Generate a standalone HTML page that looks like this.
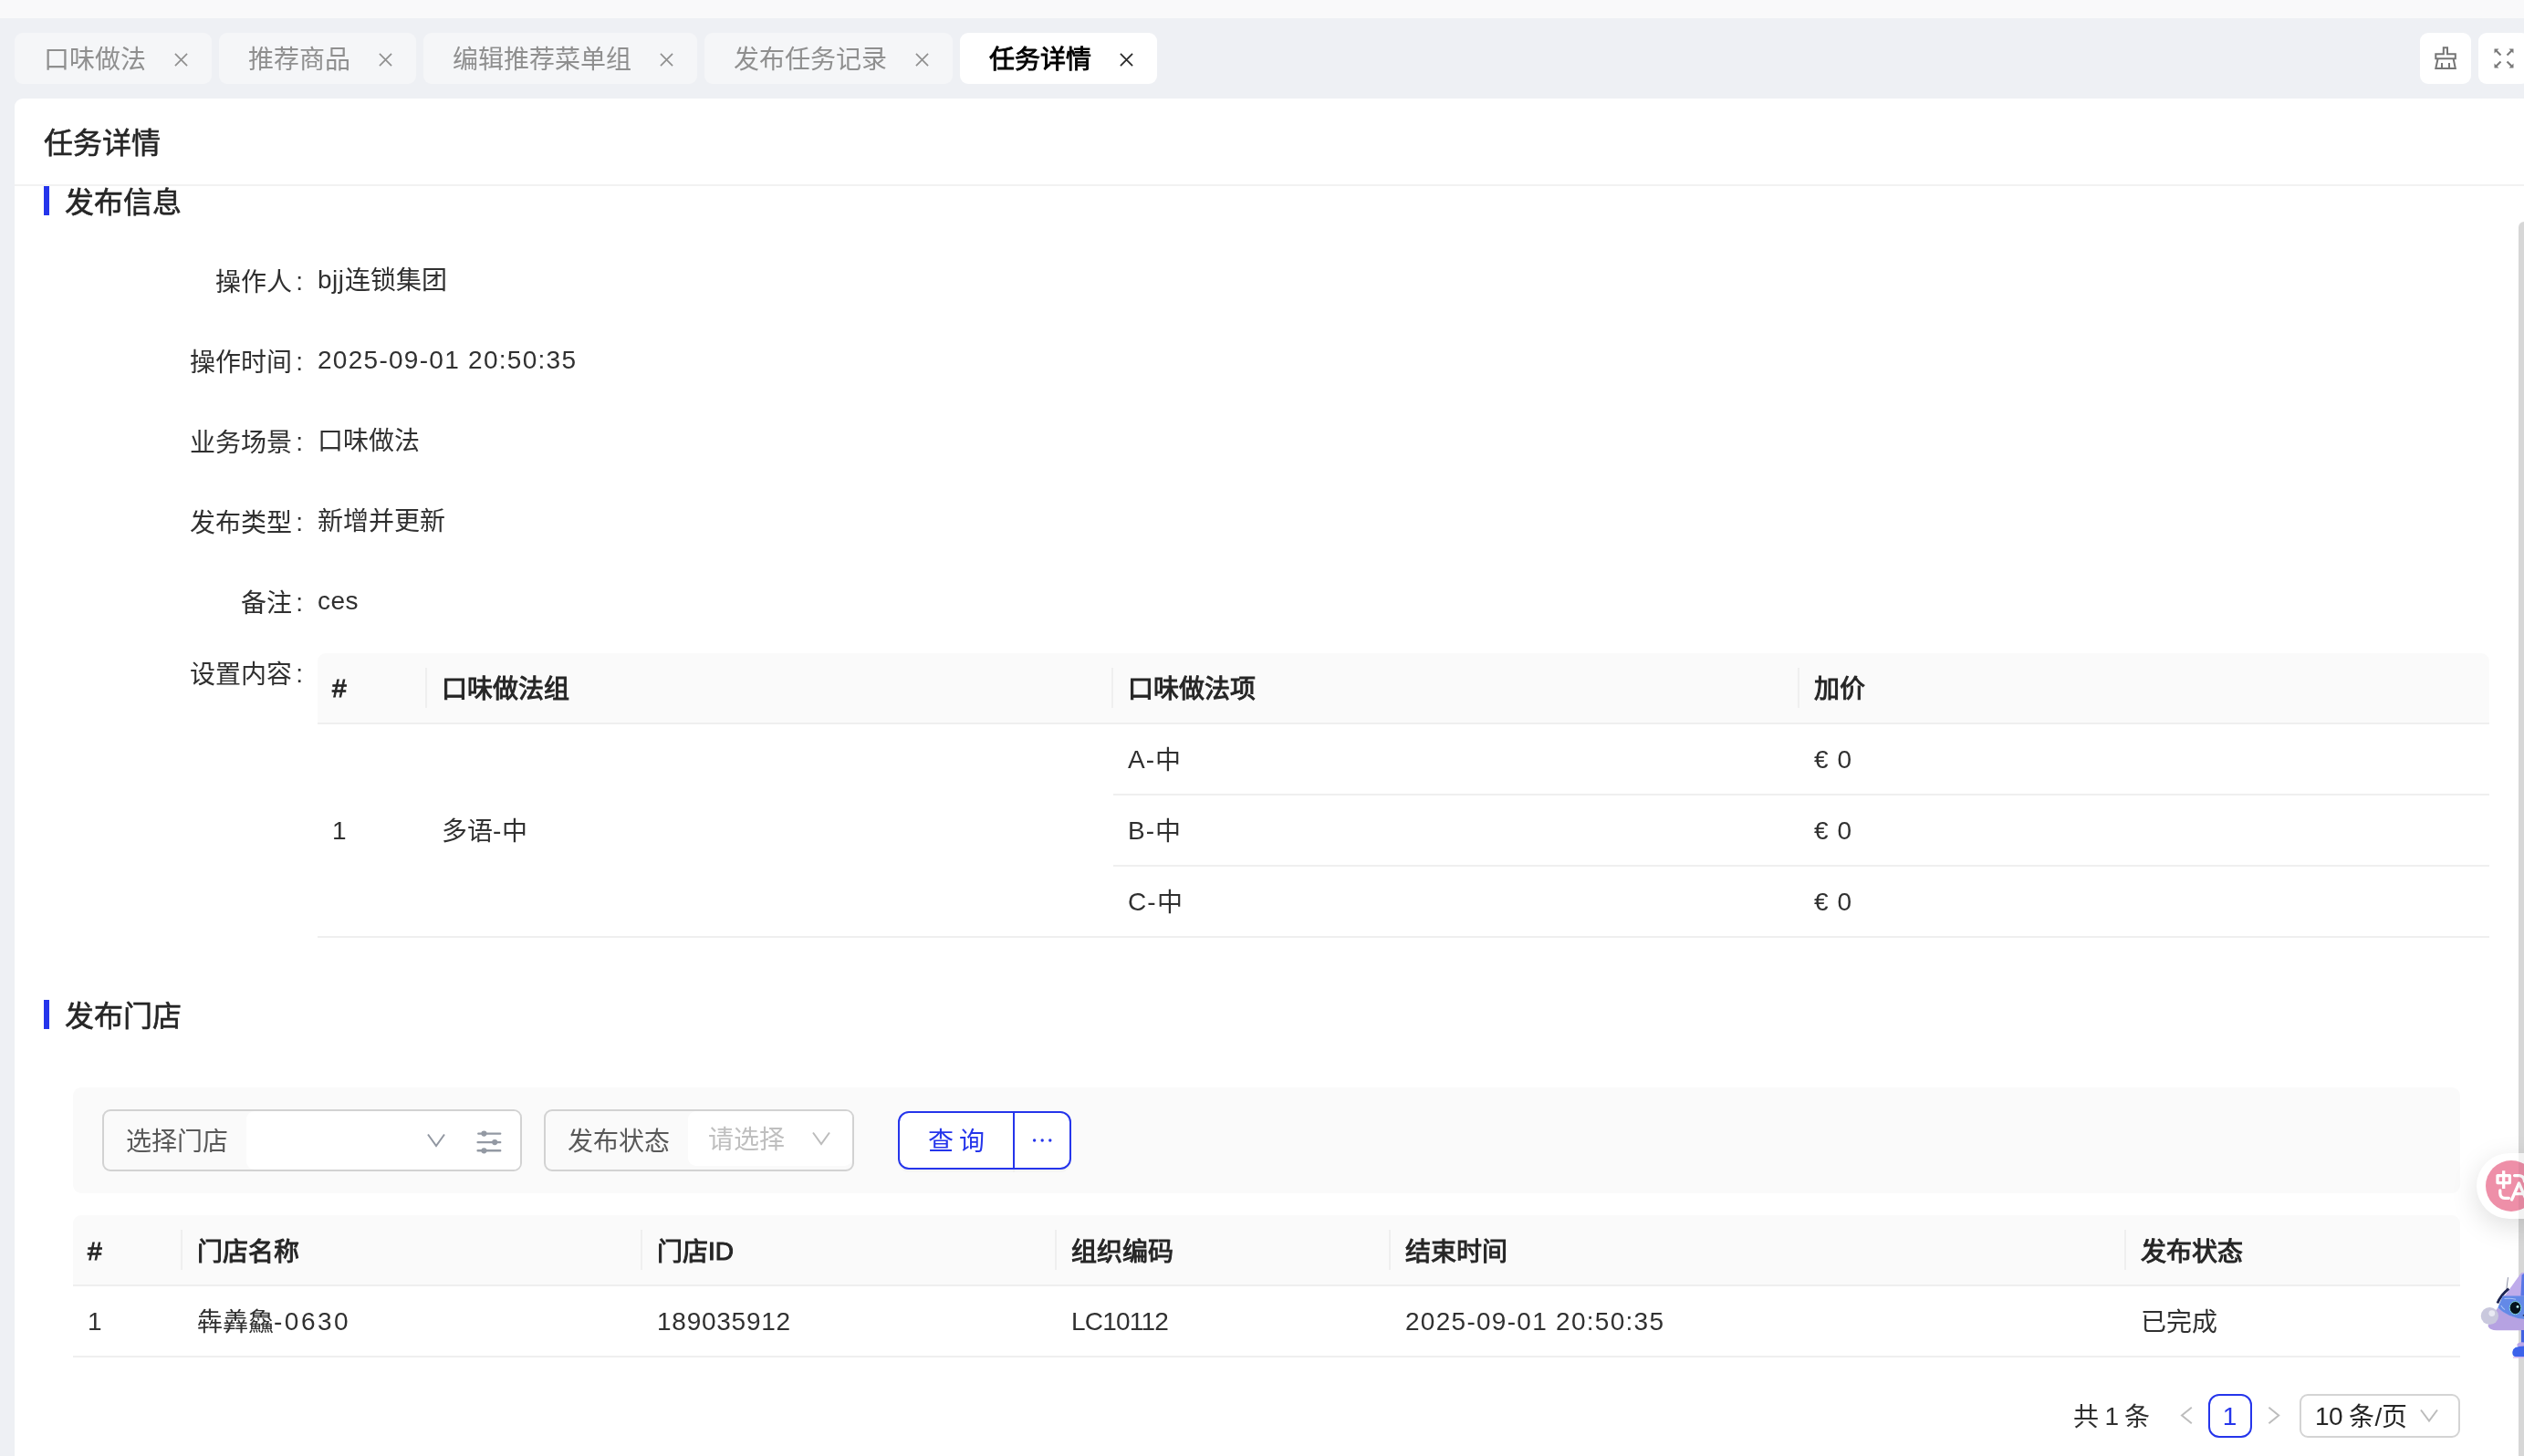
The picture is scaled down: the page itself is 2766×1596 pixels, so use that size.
<!DOCTYPE html>
<html lang="zh-CN">
<head>
<meta charset="utf-8">
<title>任务详情</title>
<style>
*{box-sizing:border-box}
html,body{margin:0;padding:0}
body{width:2766px;height:1596px;overflow:hidden;position:relative;background:#eef0f4;font-family:"Liberation Sans",sans-serif;color:#262626;font-size:28px;line-height:44px}
#root{position:absolute;left:0;top:0;width:2766px;height:1596px;overflow:hidden;will-change:transform}
.a{position:absolute}
.l{position:relative;top:-1px}
.d1{margin-top:1px}.d2{margin-top:2px}.d3{margin-top:3px}
.topstrip{left:0;top:0;width:2766px;height:20px;background:#f9f9fa}
/* tabs */
.tab{position:absolute;top:36px;height:56px;border-radius:9px;background:#f5f6f8;color:#8f8f8f;font-size:28px;line-height:60px;padding-left:32px;white-space:nowrap}
.tab.on{background:#fff;color:#000;-webkit-text-stroke:.9px #000}
.tab svg{position:absolute;right:26px;top:22px;width:15px;height:15px}
.ibtn{position:absolute;top:36px;width:56px;height:56px;border-radius:9px;background:#fff}
/* card */
.card{left:16px;top:108px;width:2760px;height:1500px;background:#fff;border-radius:9px 0 0 0}
.ptitle{left:48px;top:135px;font-size:32px;line-height:44px;color:#262626;-webkit-text-stroke:.6px #262626;white-space:nowrap}
.hr{left:16px;top:202px;width:2750px;height:2px;background:#f2f2f2}
.bar{left:48px;width:6px;height:32px;background:#2535eb}
.stitle{left:71px;font-size:32px;line-height:44px;color:#262626;-webkit-text-stroke:.6px #262626;white-space:nowrap}
/* form */
.lab{position:absolute;margin-top:3px;left:100px;width:248px;text-align:right;height:64px;line-height:64px;color:#303030;white-space:nowrap}
.lab i{font-style:normal;margin:0 16px 0 4px;position:relative;top:-1px}
.val{position:absolute;left:348px;height:64px;line-height:64px;color:#303030;white-space:nowrap}

/* tables */
.th{position:absolute;height:76px;line-height:76px;-webkit-text-stroke:1px #262626;color:#262626;padding-left:16px;white-space:nowrap}
.th.sep:before{content:"";position:absolute;left:-2px;top:16px;width:2px;height:44px;background:#efefef}
.ib{display:inline-block;position:relative}
.th .d2{margin:0;top:2px}.th .d3{margin:0;top:3px}
.td{position:absolute;height:76px;line-height:76px;color:#303030;padding-left:16px;white-space:nowrap}
.thead{position:absolute;height:76px;background:#fafafa;border-radius:9px 9px 0 0}
.ln{position:absolute;height:2px;background:#efefef}

/* filter */
.fpanel{left:80px;top:1192px;width:2616px;height:116px;background:#fafafa;border-radius:9px}
.sel{position:absolute;top:1216px;height:68px;border:2px solid #d2d2d2;border-radius:9px;background:#fafafa}
.sel .lb{position:absolute;left:24px;top:0;height:64px;line-height:68px;color:#595959;white-space:nowrap}
.sel .wh{position:absolute;top:0;bottom:0;right:0;background:#fff;border-radius:9px 7px 7px 9px}
.sel .ph{position:absolute;left:22px;top:0;height:64px;line-height:64px;color:#bfbfbf;white-space:nowrap}
.btn{position:absolute;top:1218px;height:64px;border:2px solid #2535eb;background:#fff;color:#2535eb;line-height:64px;text-align:center;white-space:nowrap;box-shadow:0 3px 0 rgba(0,0,0,0.025)}

/* pager */
.pg{position:absolute;top:1528px;height:48px;line-height:48px;white-space:nowrap;color:#303030}
.pgbox{position:absolute;top:1528px;height:48px;border:2px solid #d4d4d4;border-radius:10px;background:#fff;line-height:44px;white-space:nowrap;color:#262626}
/* float */
.scroll{left:2760px;top:243px;width:12px;height:1400px;border-radius:6px;background:rgba(0,0,0,0.155)}
</style>
</head>
<body>
<div id="root">
<div class="a topstrip"></div>

<!-- tabs -->
<div class="tab" style="left:16px;width:216px">口味做法<svg viewBox="0 0 16 16"><path d="M1 1L15 15M15 1L1 15" stroke="#909090" stroke-width="1.8" fill="none"/></svg></div>
<div class="tab" style="left:240px;width:216px">推荐商品<svg viewBox="0 0 16 16"><path d="M1 1L15 15M15 1L1 15" stroke="#909090" stroke-width="1.8" fill="none"/></svg></div>
<div class="tab" style="left:464px;width:300px">编辑推荐菜单组<svg viewBox="0 0 16 16"><path d="M1 1L15 15M15 1L1 15" stroke="#909090" stroke-width="1.8" fill="none"/></svg></div>
<div class="tab" style="left:772px;width:272px">发布任务记录<svg viewBox="0 0 16 16"><path d="M1 1L15 15M15 1L1 15" stroke="#909090" stroke-width="1.8" fill="none"/></svg></div>
<div class="tab on" style="left:1052px;width:216px">任务详情<svg viewBox="0 0 16 16"><path d="M1 1L15 15M15 1L1 15" stroke="#2a2a2a" stroke-width="1.9" fill="none"/></svg></div>

<!-- right icon buttons -->
<div class="ibtn" style="left:2652px">
<svg class="a" style="left:14px;top:14px" width="28" height="28" viewBox="0 0 28 28" fill="none" stroke="#757575" stroke-width="2">
<path d="M11.8 9.2V2.2H16V9.2H24.8V14.2H3.3V9.2Z"/>
<path d="M5.6 14.2L3.3 25H24.8L22.6 14.2"/>
<path d="M10 19V25M18 19V25"/>
</svg>
</div>
<div class="ibtn" style="left:2716px">
<svg class="a" style="left:16px;top:16px" width="24" height="24" viewBox="0 0 24 24" fill="#7a7a7a" stroke="#7a7a7a" stroke-width="2.2">
<path d="M3 3L8.5 8.5M21 3L15.5 8.5M3 21L8.5 15.5M21 21L15.5 15.5" fill="none"/>
<path d="M1.5 1.5H6.5L1.5 6.5Z M22.5 1.5H17.5L22.5 6.5Z M1.5 22.5H6.5L1.5 17.5Z M22.5 22.5H17.5L22.5 17.5Z" stroke="none"/>
</svg>
</div>

<!-- card -->
<div class="a card"></div>
<div class="a ptitle">任务详情</div>
<div class="a hr"></div>

<div class="a bar" style="top:204px"></div>
<div class="a stitle" style="top:200px">发布信息</div>

<!-- form -->
<div class="lab" style="top:275px">操作人<i>:</i></div><div class="val d1" style="top:275px"><span class="l" style="letter-spacing:.5px">bjj</span>连锁集团</div>
<div class="lab" style="top:363px">操作时间<i>:</i></div><div class="val" style="top:363px;letter-spacing:1.28px">2025-09-01 20:50:35</div>
<div class="lab" style="top:451px">业务场景<i>:</i></div><div class="val d1" style="top:451px">口味做法</div>
<div class="lab" style="top:539px">发布类型<i>:</i></div><div class="val d1" style="top:539px">新增并更新</div>
<div class="lab" style="top:627px">备注<i>:</i></div><div class="val" style="top:627px;letter-spacing:.5px">ces</div>
<div class="lab" style="top:705px">设置内容<i>:</i></div>

<!-- table 1 -->
<div class="thead" style="left:348px;top:716px;width:2380px"></div>
<div class="ln" style="left:348px;top:792px;width:2380px"></div>
<div class="th d1" style="left:348px;top:716px">#</div>
<div class="th sep" style="left:468px;top:716px"><span class="d2 ib">口味做法组</span></div>
<div class="th sep" style="left:1220px;top:716px"><span class="d2 ib">口味做法项</span></div>
<div class="th sep" style="left:1972px;top:716px"><span class="d2 ib">加价</span></div>
<div class="td" style="left:348px;top:873px">1</div>
<div class="td d2" style="left:468px;top:872px">多语<span class="l" style="letter-spacing:1px">-</span>中</div>
<div class="td d2" style="left:1220px;top:794px"><span class="l" style="letter-spacing:1px">A-</span>中</div><div class="td d1" style="left:1972px;top:794px;letter-spacing:1.1px">€ 0</div>
<div class="ln" style="left:1220px;top:870px;width:1508px"></div>
<div class="td d2" style="left:1220px;top:872px"><span class="l" style="letter-spacing:1px">B-</span>中</div><div class="td d1" style="left:1972px;top:872px;letter-spacing:1.1px">€ 0</div>
<div class="ln" style="left:1220px;top:948px;width:1508px"></div>
<div class="td d2" style="left:1220px;top:950px"><span class="l" style="letter-spacing:1px">C-</span>中</div><div class="td d1" style="left:1972px;top:950px;letter-spacing:1.1px">€ 0</div>
<div class="ln" style="left:348px;top:1026px;width:2380px"></div>

<!-- section 2 -->
<div class="a bar" style="top:1096px"></div>
<div class="a stitle" style="top:1092px">发布门店</div>

<!-- filter -->
<div class="a fpanel"></div>
<div class="sel" style="left:112px;width:460px">
<span class="lb">选择门店</span>
<div class="wh" style="left:156px">
<svg class="a" style="left:196px;top:23px" width="24" height="18" viewBox="0 0 24 18" fill="none" stroke="#9197a1" stroke-width="2"><path d="M3 2.5L12 15L21 2.5"/></svg>
<svg class="a" style="left:250px;top:18px" width="32" height="32" viewBox="0 0 32 32" fill="#9399a3" stroke="#9399a3" stroke-width="2.4" stroke-linecap="round"><path d="M4.3 6.6H28.2M3.6 16.1H28.2M3.6 25.3H28.2" fill="none"/><circle cx="10.4" cy="6.6" r="3.1" stroke="none"/><circle cx="22.2" cy="16.1" r="3.1" stroke="none"/><circle cx="10.4" cy="25.3" r="3.1" stroke="none"/></svg>
</div>
</div>
<div class="sel" style="left:596px;width:340px">
<span class="lb">发布状态</span>
<div class="wh" style="left:156px;bottom:4px;border-radius:9px 7px 9px 9px">
<span class="ph">请选择</span>
<svg class="a" style="left:134px;top:21px" width="24" height="18" viewBox="0 0 24 18" fill="none" stroke="#bcbcbc" stroke-width="2"><path d="M3 2.5L12 15L21 2.5"/></svg>
</div>
</div>
<div class="btn" style="left:984px;width:128px;border-radius:12px 0 0 12px"><span style="letter-spacing:6.5px;margin-right:-6.5px">查询</span></div>
<div class="btn" style="left:1110px;width:64px;border-radius:0 12px 12px 0">
<svg class="a" style="left:18px;top:26px" width="24" height="8" viewBox="0 0 24 8" fill="#2535eb"><circle cx="3.6" cy="4" r="1.7"/><circle cx="12.2" cy="4" r="1.7"/><circle cx="20.8" cy="4" r="1.7"/></svg>
</div>

<!-- table 2 -->
<div class="thead" style="left:80px;top:1332px;width:2616px"></div>
<div class="ln" style="left:80px;top:1408px;width:2616px"></div>
<div class="th d2" style="left:80px;top:1332px">#</div>
<div class="th sep" style="left:200px;top:1332px"><span class="d3 ib">门店名称</span></div>
<div class="th sep" style="left:704px;top:1332px"><span class="d3 ib">门店<span class="l">ID</span></span></div>
<div class="th sep" style="left:1158px;top:1332px"><span class="d3 ib">组织编码</span></div>
<div class="th sep" style="left:1524px;top:1332px"><span class="d3 ib">结束时间</span></div>
<div class="th sep" style="left:2330px;top:1332px"><span class="d3 ib">发布状态</span></div>
<div class="td d1" style="left:80px;top:1410px">1</div>
<div class="td d2" style="left:200px;top:1410px">犇羴鱻<span class="l" style="letter-spacing:2.5px">-0630</span></div>
<div class="td d1" style="left:704px;top:1410px;letter-spacing:.75px">189035912</div>
<div class="td d1" style="left:1158px;top:1410px;letter-spacing:-.8px">LC10112</div>
<div class="td d1" style="left:1524px;top:1410px;letter-spacing:1.28px">2025-09-01 20:50:35</div>
<div class="td d2" style="left:2330px;top:1410px">已完成</div>
<div class="ln" style="left:80px;top:1486px;width:2616px"></div>

<!-- pager -->
<div class="pg d2" style="left:2272px">共<span class="l" style="letter-spacing:-1.2px"> 1 </span>条</div>
<svg class="a" style="left:2387px;top:1539.5px" width="20" height="24" viewBox="0 0 20 24" fill="none" stroke="#bdbdbd" stroke-width="2"><path d="M14.8 2.8L4 11.5L14.8 20.2"/></svg>
<div class="pgbox" style="left:2420px;width:48px;border-color:#2535eb;border-radius:12px;color:#2535eb;text-align:center;line-height:46px;padding-right:1px">1</div>
<svg class="a" style="left:2482px;top:1539.5px" width="20" height="24" viewBox="0 0 20 24" fill="none" stroke="#bdbdbd" stroke-width="2"><path d="M4.4 2.8L15.2 11.5L4.4 20.2"/></svg>
<div class="pgbox" style="left:2520px;width:176px;padding-left:15px;border-radius:9px;line-height:48px"><span class="l" style="letter-spacing:-.5px">10 </span>条/页
<svg class="a" style="left:128px;top:13px" width="24" height="18" viewBox="0 0 24 18" fill="none" stroke="#bcbcbc" stroke-width="2"><path d="M3 2.5L12 14.5L21 2.5"/></svg>
</div>

<!-- floating widgets -->
<div class="a scroll"></div>
<div class="a" style="left:2714px;top:1264px;width:90px;height:72px;border-radius:36px;background:#fff;box-shadow:0 8px 30px rgba(0,0,0,0.13)"></div>
<div class="a" style="left:2724px;top:1272px;width:56px;height:56px;border-radius:28px;background:#ee8fa8;overflow:hidden">
<svg class="a" style="left:8px;top:8px" width="44" height="40" viewBox="0 0 44 40" fill="none" stroke="#fff" stroke-width="3.3" stroke-linejoin="round">
<path d="M5 8.6H18.4V16.6H5ZM11.7 3.2V23"/>
<path d="M23.6 8.6H29Q34 9 34.6 15" stroke-linecap="round"/>
<path d="M7.8 25V28Q8 33.3 13 33.3H17.4" stroke-linecap="round"/>
<path d="M20.6 35L28.5 17L36.4 35M23.4 28.6H33.6" stroke-linecap="round"/>
</svg>
</div>
<div class="a" style="left:2760px;top:1264px;width:6px;height:72px;background:rgba(0,0,0,0.05)"></div>
<svg class="a" style="left:2716px;top:1390px" width="50" height="104" viewBox="0 0 50 104">
<path d="M46.9 5.2Q48.5 4.6 50 4.8V31H27L29.6 29.6Z" fill="#bfaceb"/>
<path d="M47.6 7.5L50 6V30.6H46.4Z" fill="#5876e6"/>
<path d="M32.5 10.2L30.4 26.3" stroke="#8d90a6" stroke-width="1" fill="none"/>
<path d="M33.3 22.6Q24.5 29.5 20.9 38.6" stroke="#1c2450" stroke-width="2.8" fill="none"/>
<path d="M10.5 63.5Q14 52 21.3 43.6Q34 54 50 56V68.3H20Q12.5 68.3 10.5 63.5Z" fill="#b6a2e2"/>
<path d="M26.7 30.4H50V56Q33 54.6 21.3 43.6Z" fill="#6389e7"/>
<path d="M28.5 33.5Q35 32.6 41 34.2M24.8 41Q26.5 44 29 45.6" stroke="#a9c2f4" stroke-width="1.1" fill="none"/>
<ellipse cx="40.5" cy="43.6" rx="6.3" ry="7.1" fill="#06131d" stroke="#79d3dc" stroke-width="1"/>
<circle cx="43" cy="42.4" r="1.4" fill="#b8f4f6"/>
<path d="M48.8 51.2H50V52.6H48.8Z" fill="#10142c"/>
<circle cx="12.4" cy="52.5" r="9.6" fill="#c9c8dd"/>
<circle cx="14.8" cy="49.6" r="3.4" fill="#e9e9f3"/>
<path d="M46.9 68H50V83H46.9Z" fill="#4161e2"/>
<ellipse cx="48" cy="84.2" rx="5.6" ry="3" fill="#bba7e8"/>
<path d="M37.3 92Q37.6 85.6 50 85.6V97.6H41Q37 96.6 37.3 92Z" fill="#3c62ea"/>
<path d="M38 98H50" stroke="#dcb9f0" stroke-width="1.4" fill="none"/>
</svg>
</div>
</body>
</html>
